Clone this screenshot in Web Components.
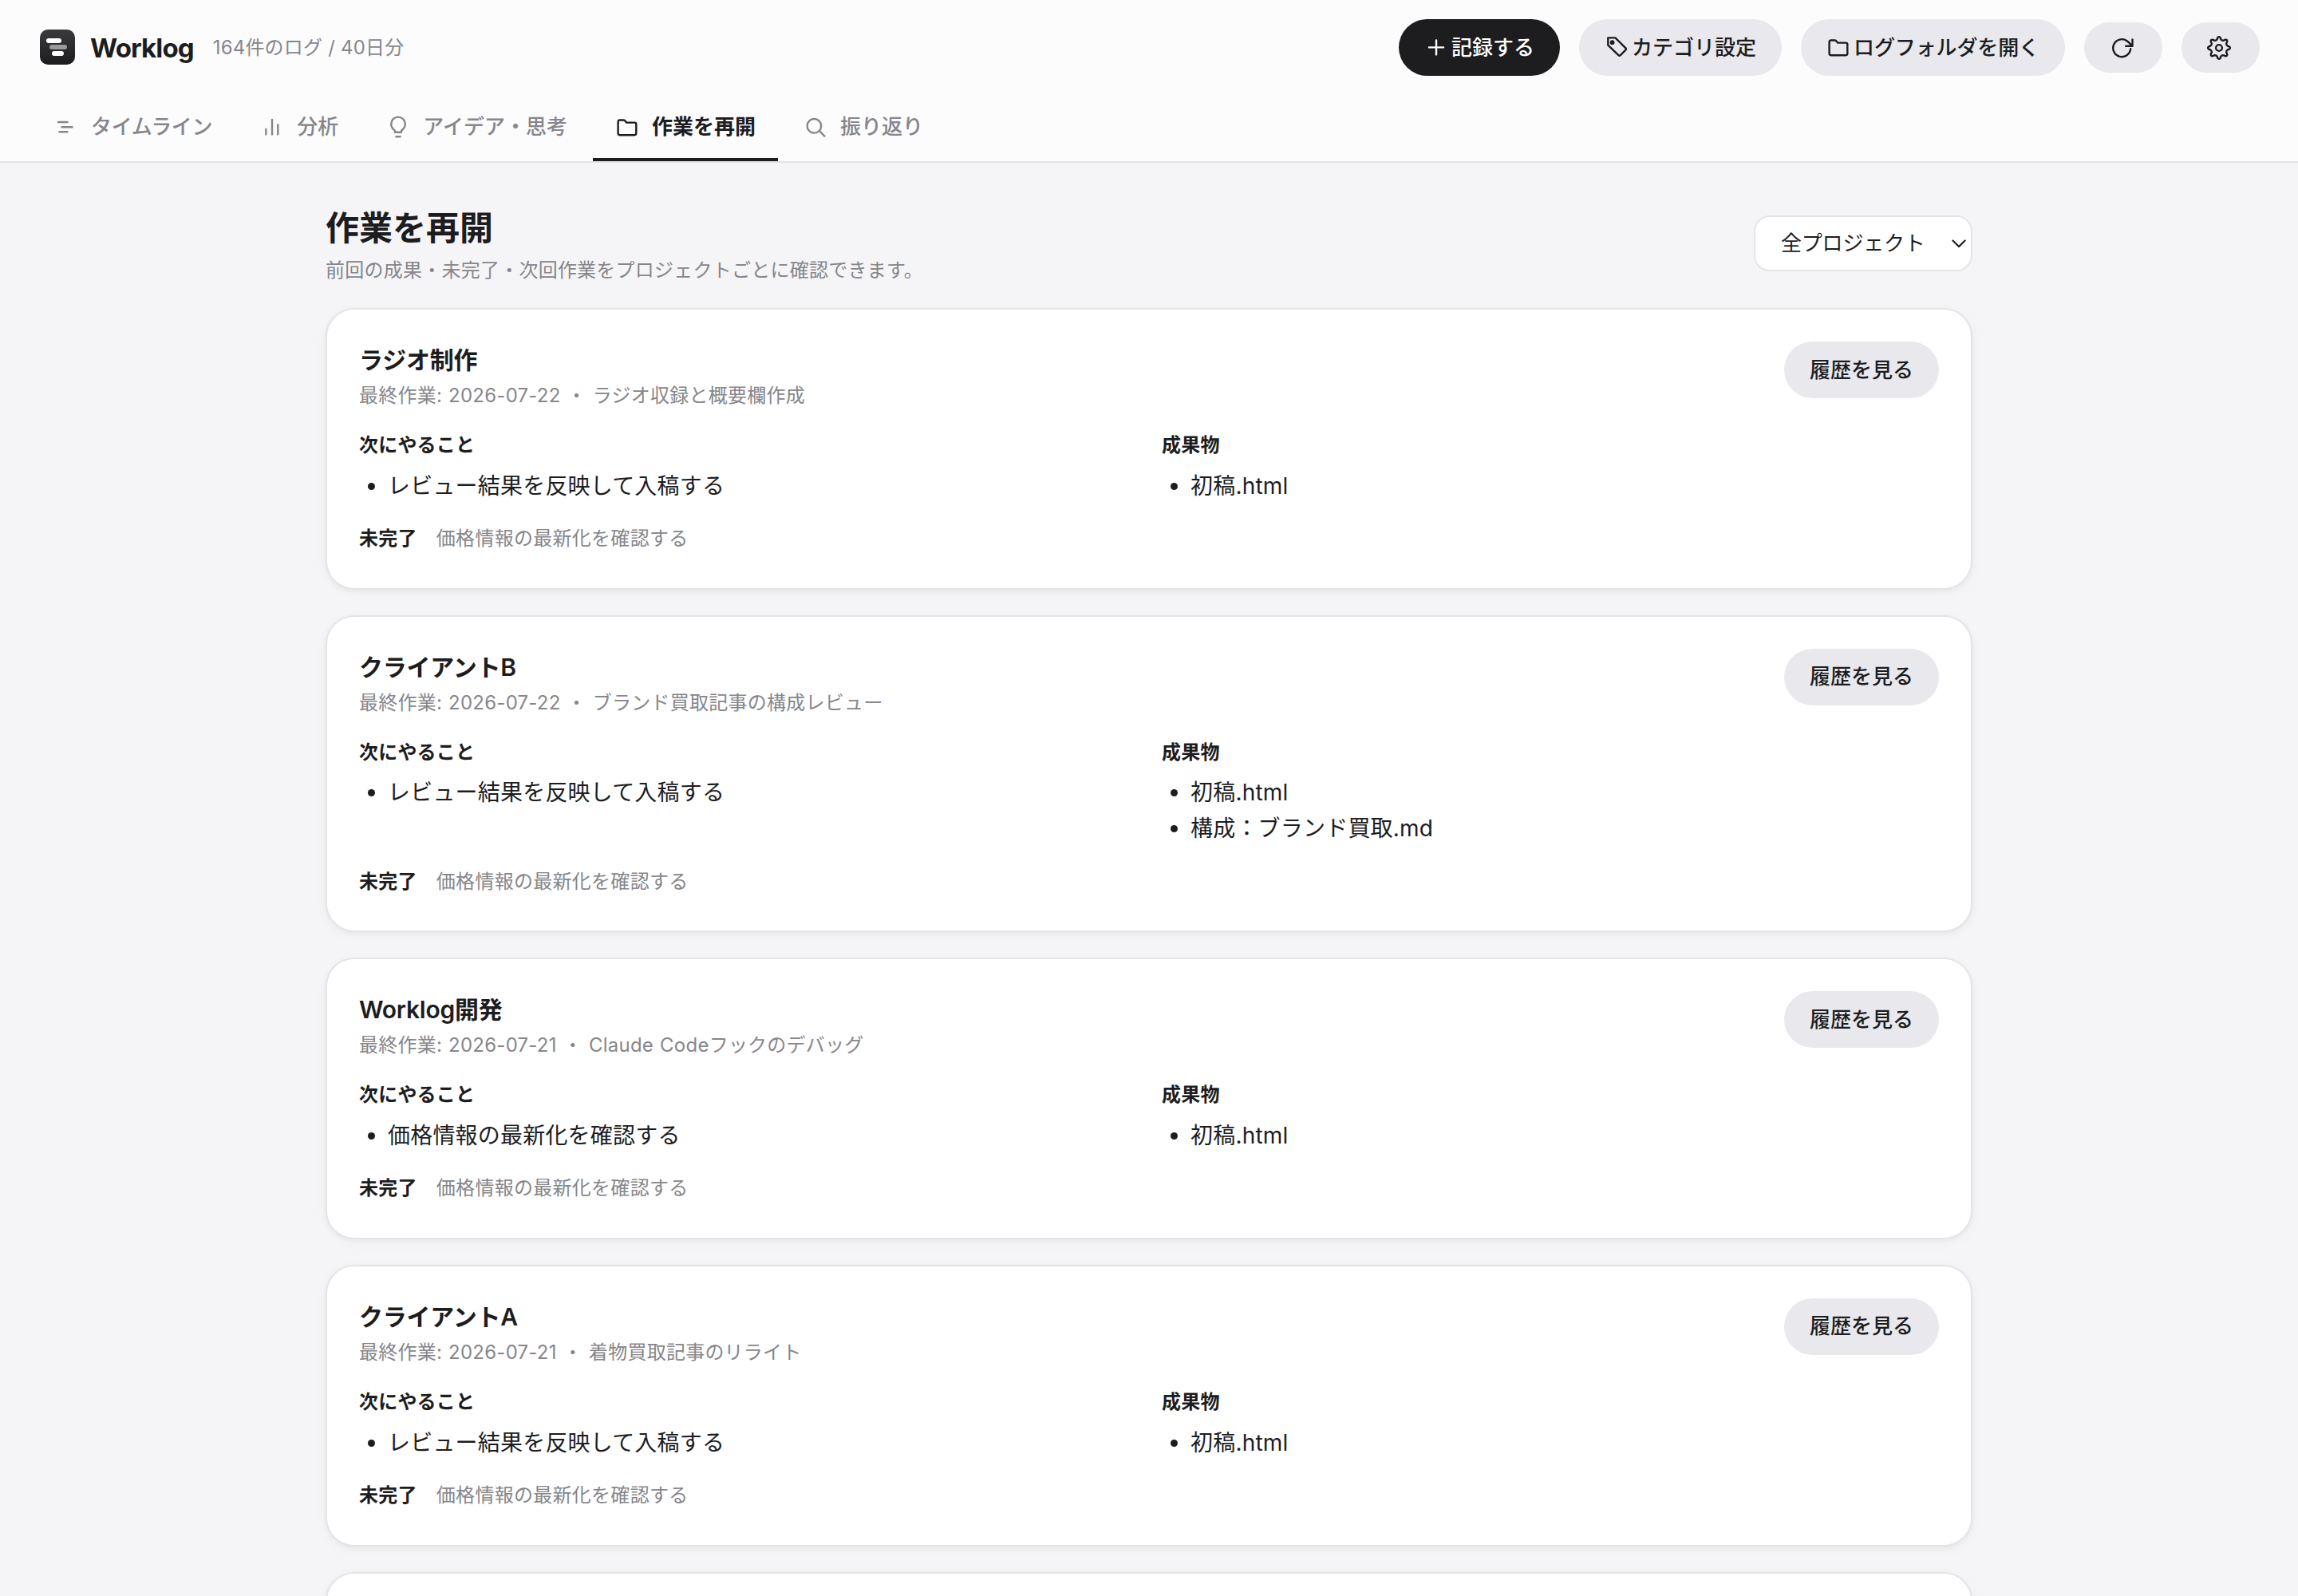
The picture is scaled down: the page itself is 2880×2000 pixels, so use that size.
<!DOCTYPE html>
<html lang="ja">
<head>
<meta charset="utf-8">
<title>Worklog</title>
<style>
body{margin:0;background:#f5f5f7;color:#1d1d1f;font-family:Inter,"Noto Sans CJK JP",sans-serif;width:2880px;height:2000px;overflow:hidden}
</style>
</head>
<body>
<work-app></work-app>
<script>
const define = (name, render) => customElements.define(name, class extends HTMLElement {
  connectedCallback() {
    if (this.shadowRoot) return;
    this.attachShadow({ mode: 'open' }).innerHTML = render(this);
  }
});
const attr = (el, n) => el.getAttribute(n) || '';

const gear = (() => {
  const n = 8, k = Math.PI / 180;
  let d = '';
  const p = (r, a) => (15 + r * Math.sin(a)).toFixed(2) + ' ' + (15 - r * Math.cos(a)).toFixed(2);
  for (let i = 0; i < n; i++) {
    const a = i * Math.PI * 2 / n;
    d += (i ? 'L' : 'M') + p(12.8, a - 8 * k) + 'Q' + p(15, a) + ' ' + p(12.8, a + 8 * k);
    d += 'L' + p(11.2, a + 11.5 * k) + 'Q' + p(9.4, a + 22.5 * k) + ' ' + p(11.2, a + 33.5 * k);
  }
  return d + 'Z';
})();
const ICONS = {
  plus: '<path d="M15 5.4V23.4M6 14.4H24"/>',
  tag: '<path d="M4.3 2.4H13.4L26.3 15.2a1.8 1.8 0 0 1 0 2.5L19.9 24.1a1.8 1.8 0 0 1-2.5 0L4.3 11.6Z"/><circle cx="9.6" cy="8.2" r="1.7" fill="currentColor"/>',
  folder: '<path d="M3.6 22.1V7.5a2 2 0 0 1 2-2H10.4q1 0 1.7.7l2.2 2.4H24.3a2 2 0 0 1 2 2V22.1a2.1 2.1 0 0 1-2.1 2.1H5.7a2.1 2.1 0 0 1-2.1-2.1Z"/>',
  refresh: '<path d="M26.2 16.2A11 11 0 1 1 21.6 6.2Q24.5 8.4 28 12.3M28.5 4.4V12.8H20.2"/>',
  gear: '<path d="' + gear + '"/><circle cx="15" cy="15" r="3.9"/>',
  lines: '<path d="M5 8H16.5M9.5 14.2H22.5M6.5 20.3H16.5"/>',
  bars: '<path d="M7.3 16.8V23.4M15 5V23.4M22.3 11.2V23.4"/>',
  bulb: '<path d="M11 20.8V18.6C8.5 16.8 6.2 14.4 6.2 10.4a8.8 8.8 0 0 1 17.6 0C23.8 14.4 21.5 16.8 19 18.6V20.8ZM12.4 26.2H17.6"/>',
  search: '<circle cx="13.4" cy="12.8" r="8.8"/><path d="M19.9 19.2L26.4 25.6"/>'
};

define('wl-icon', el => `<style>
:host{display:block;width:30px;height:30px;flex:none}
svg{display:block;width:30px;height:30px;fill:none;stroke:currentColor;stroke-width:2.4;stroke-linecap:round;stroke-linejoin:round}
</style><svg viewBox="0 0 30 30">${ICONS[attr(el, 'name')]}</svg>`);

define('wl-logo', () => `<style>
:host{display:flex;flex-direction:column;gap:2px;box-sizing:border-box;width:44px;height:44px;border-radius:10px;background:linear-gradient(#3a3a3c,#1c1c1e);padding:11px 0 0 8px;margin-top:-1px;flex:none}
i{display:block;height:6px;border-radius:3px;background:#fff}
i:nth-of-type(1){width:19px}
i:nth-of-type(2){width:22px;margin-left:4px;background:#98989d}
i:nth-of-type(3){width:15px;margin-left:7px}
</style><i></i><i></i><i></i>`);

define('wl-button', el => `<style>
:host{display:flex;align-items:center;box-sizing:border-box;height:71px;padding:0 32px;border-radius:36px;background:#e8e8ed;color:#1d1d1f;font-size:26px;font-weight:500;line-height:42px;white-space:nowrap;flex:none}
:host([primary]){background:#1d1d1f;color:#fff}
:host([compact]){height:63px;border-radius:32px}
wl-icon{margin-right:4px}
</style>${attr(el, 'icon') ? `<wl-icon name="${attr(el, 'icon')}"></wl-icon>` : ''}<slot></slot>`);

define('wl-tab', el => `<style>
:host{display:flex;align-items:center;gap:16px;box-sizing:border-box;height:86px;padding:3px 28px 0;border-bottom:4px solid transparent;color:#86868b;font-size:26px;font-weight:500;line-height:42px;white-space:nowrap}
:host([active]){color:#1d1d1f;border-color:#1d1d1f;font-weight:700}
wl-icon{margin-top:2px}
</style><wl-icon name="${attr(el, 'icon')}"></wl-icon><slot></slot>`);

define('wl-header', () => `<style>
:host{display:flex;flex-direction:column;box-sizing:border-box;height:204px;background:#fcfcfd;border-bottom:2px solid #e3e3e5}
.top{display:flex;align-items:center;gap:24px;height:71px;padding:24px 48px 0 50px}
.brand{font-size:33px;font-weight:700;letter-spacing:-.9px;margin-left:-5px;line-height:44px}
.count{font-size:24px;color:#86868b;flex:1;letter-spacing:.2px;line-height:40px}
nav{display:flex;gap:4px;padding:21px 40px 0}
</style>
<div class="top"><wl-logo></wl-logo><div class="brand">Worklog</div><div class="count">164件のログ / 40日分</div>
<wl-button primary icon="plus">記録する</wl-button><wl-button icon="tag">カテゴリ設定</wl-button><wl-button icon="folder" style="letter-spacing:-.12px">ログフォルダを開く</wl-button><wl-button compact icon="refresh"></wl-button><wl-button compact icon="gear"></wl-button></div>
<nav><wl-tab icon="lines" style="letter-spacing:-.33px">タイムライン</wl-tab><wl-tab icon="bars">分析</wl-tab><wl-tab icon="bulb">アイデア・思考</wl-tab><wl-tab icon="folder" active>作業を再開</wl-tab><wl-tab icon="search">振り返り</wl-tab></nav>`);

define('wl-select', () => `<style>
:host{display:flex;align-items:center;justify-content:space-between;box-sizing:border-box;width:274px;height:70px;border:2px solid #e5e5e7;border-radius:20px;background:#fff;padding:0 5px 0 32px;font-size:26px;line-height:42px;letter-spacing:-.2px;flex:none}
svg{width:20px;height:12px;fill:none;stroke:#1d1d1f;stroke-width:2.2;stroke-linecap:round;stroke-linejoin:round}
</style><slot></slot><svg viewBox="0 0 20 12"><path d="M2.4 2.5L10 10L17.6 2.5"/></svg>`);

define('wl-page-head', () => `<style>
:host{display:flex;justify-content:space-between;align-items:flex-start;height:108px;margin-bottom:22px}
h1{margin:1px 0 5px;font-size:42px;line-height:58px;font-weight:700}
p{margin:0;font-size:24px;line-height:38px;color:#86868b;letter-spacing:.24px}
wl-select{margin-top:14px}
</style><div><h1>作業を再開</h1><p>前回の成果・未完了・次回作業をプロジェクトごとに確認できます。</p></div><wl-select>全プロジェクト</wl-select>`);

define('wl-list', el => `<style>
:host{display:block;width:974px}
h3{margin:0;font-size:24px;line-height:38.4px;font-weight:700;letter-spacing:.2px}
ul{list-style:none;margin:9.5px 0 0;padding:0}
li{display:flex;align-items:center;gap:16px;padding-left:11px;font-size:28px;line-height:44.8px;height:44.8px;letter-spacing:.2px}
li::before{content:"";width:9px;height:9px;border-radius:50%;background:#1d1d1f}
</style><h3>${attr(el, 'label')}</h3><ul>${attr(el, 'items').split('|').map(t => `<li>${t}</li>`).join('')}</ul>`);

define('wl-project', el => `<style>
:host{display:block;box-sizing:border-box;border:2px solid #e5e5e7;border-radius:36px;background:#fff;padding:40px;height:352.7px;box-shadow:0 2px 6px rgba(0,0,0,.04),0 4px 16px rgba(0,0,0,.03)}
:host([tall]){height:397.5px}
header{display:flex;justify-content:space-between;align-items:flex-start;height:86.4px}
h2{margin:-1px 0 2px;font-size:30px;line-height:48px;font-weight:600;letter-spacing:-.25px}
.meta{font-size:24px;line-height:38.4px;color:#86868b;letter-spacing:.24px;word-spacing:1px;white-space:pre}
.cols{display:flex;gap:32px;margin-top:24.5px}
.pend{display:flex;gap:24px;margin-top:24.5px;font-size:24px;line-height:38.4px;color:#86868b;letter-spacing:.28px}
b{color:#1d1d1f}
</style><header><div><h2>${attr(el, 'name')}</h2><div class="meta">最終作業: ${attr(el, 'date')} ・ ${attr(el, 'task')}</div></div><wl-button>履歴を見る</wl-button></header>
<div class="cols"><wl-list label="次にやること" items="${attr(el, 'next')}"></wl-list><wl-list label="成果物" items="${attr(el, 'out')}"></wl-list></div>
<div class="pend"><b>未完了</b><span>価格情報の最新化を確認する</span></div>`);

define('work-app', () => `<style>
:host{display:block}
main{display:flex;flex-direction:column;width:2064px;margin:0 auto;padding-top:52px}
.cards{display:flex;flex-direction:column;gap:32px}
.next{height:80px;box-sizing:border-box;border:2px solid #e5e5e7;border-radius:36px 36px 0 0;background:#fff;box-shadow:0 2px 6px rgba(0,0,0,.04),0 4px 16px rgba(0,0,0,.03)}
</style><wl-header></wl-header><main><wl-page-head></wl-page-head><div class="cards">
<wl-project name="ラジオ制作" date="2026-07-22" task="ラジオ収録と概要欄作成" next="レビュー結果を反映して入稿する" out="初稿.html"></wl-project>
<wl-project tall name="クライアントB" date="2026-07-22" task="ブランド買取記事の構成レビュー" next="レビュー結果を反映して入稿する" out="初稿.html|構成：ブランド買取.md"></wl-project>
<wl-project name="Worklog開発" date="2026-07-21" task="Claude Codeフックのデバッグ" next="価格情報の最新化を確認する" out="初稿.html"></wl-project>
<wl-project name="クライアントA" date="2026-07-21" task="着物買取記事のリライト" next="レビュー結果を反映して入稿する" out="初稿.html"></wl-project>
<section class="next"></section>
</div></main>`);
</script>
</body>
</html>
